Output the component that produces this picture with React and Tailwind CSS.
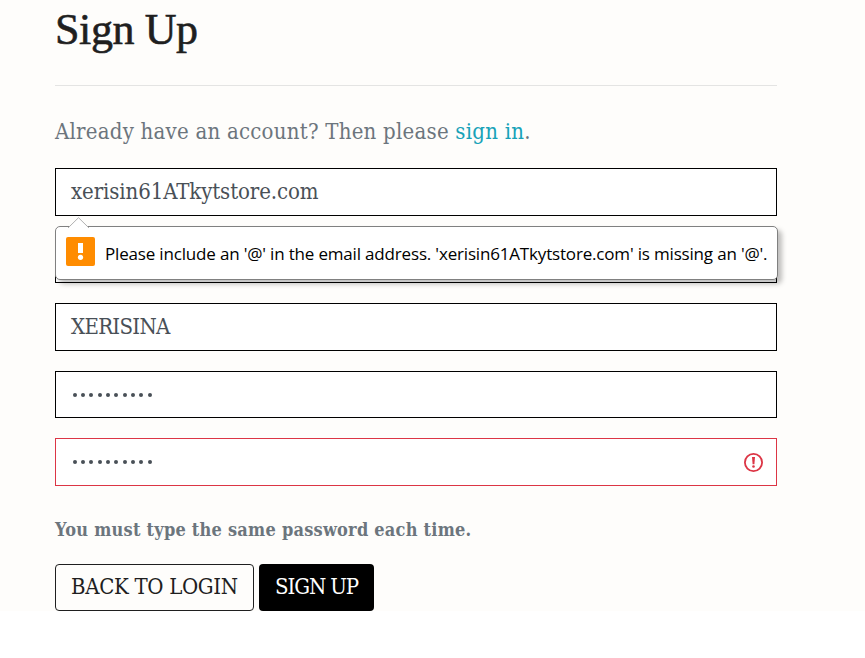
const serif = "font-['DejaVu_Serif_Condensed','DejaVu_Serif',serif] [font-stretch:condensed]";

function Dots() {
  return (
    <div className="flex gap-[4.35px] pl-[1.5px]">
      {Array.from({ length: 10 }, (_, i) => (
        <span key={i} className="size-[4px] rounded-full bg-[#495057]" />
      ))}
    </div>
  );
}

function Field({ children, height = 'h-12', border = 'border-black' }) {
  return (
    <div className={`relative flex w-full items-center border bg-white px-[15px] text-[#495057] ${height} ${border}`}>
      {children}
    </div>
  );
}

function ValidationBubble() {
  return (
    <div className="absolute top-[57px] -left-px z-10 flex h-[54px] w-[723px] items-center rounded-[5px] border border-[#808080] bg-white pl-[10px] shadow-[4px_4px_5px_rgba(0,0,0,0.25)]">
      <svg className="absolute -top-[10px] left-[11px]" width="23" height="11" viewBox="0 0 23 11">
        <path d="M1 11L11.5 .7L22 11" fill="#fff" stroke="#b0b0b0" />
      </svg>
      <svg className="-mt-[3px] shrink-0" width="29" height="29" viewBox="0 0 29 29">
        <rect width="29" height="29" rx="2" fill="#ff8c00" />
        <path d="M12 6h5v10h-5z" fill="#fff" />
        <circle cx="14.5" cy="20.3" r="2.6" fill="#fff" />
      </svg>
      <span className="mt-[2px] ml-[10px] whitespace-nowrap font-['Open_Sans','Noto_Sans',sans-serif] text-[17px] tracking-[-0.175px] text-black [font-stretch:normal]">
        Please include an '@' in the email address. 'xerisin61ATkytstore.com' is missing an '@'.
      </span>
    </div>
  );
}

export default function App() {
  return (
    <main className="h-[658px] w-full overflow-hidden bg-white">
      <div className={`h-[611px] bg-[#fefdfb] pl-[55px] ${serif}`}>
        <form className="w-[722px]">
          <header className="h-[86px] border-b border-[#e4e4e3] pt-[4px]">
            <h1 className="whitespace-nowrap font-['Liberation_Serif',serif] text-[44px] leading-[52px] tracking-[-0.4px] text-[#1f1f1f] [-webkit-text-stroke:0.6px_#1f1f1f]">Sign Up</h1>
          </header>
          <p className="h-[82px] whitespace-nowrap pt-[30px] text-[22px] leading-8 tracking-[0.23px] text-[#6c757d]">
            Already have an account? Then please <a className="text-[#17a2b8]">sign in</a>.
          </p>
          <div className="flex flex-col">
            <Field>
              <span className="-mt-px whitespace-nowrap text-[22px] tracking-[-0.1px]">xerisin61ATkytstore.com</span>
              <ValidationBubble />
            </Field>
            <div className="h-5" />
            <Field height="h-[47px]" />
            <div className="h-5" />
            <Field><span className="-mt-px whitespace-nowrap text-[22px] tracking-[-0.7px]">XERISINA</span></Field>
            <div className="h-5" />
            <Field height="h-[47px]"><Dots /></Field>
            <div className="h-5" />
            <Field border="border-[#dc3545]">
              <Dots />
              <svg className="mr-[-2px] ml-auto" width="20" height="20" viewBox="0 0 20 20" fill="none">
                <circle cx="10.5" cy="10.5" r="8.6" stroke="#dc3545" strokeWidth="1.8" />
                <path d="M9 5h3l-.6 7.2H9.6z" fill="#dc3545" />
                <circle cx="10.5" cy="14.5" r="1.3" fill="#dc3545" />
              </svg>
            </Field>
          </div>
          <p className="h-[78px] whitespace-nowrap pt-[32px] text-[18px] leading-6 font-bold tracking-[0.24px] text-[#6c757d]">You must type the same password each time.</p>
          <div className="flex gap-[5px]">
            <button type="button" className="h-[47px] w-[199px] whitespace-nowrap rounded-[4px] border border-[#1f1f1f] pb-[3px] pl-[15px] text-left text-[22px] tracking-[-0.33px] text-[#1f1f1f]">BACK TO LOGIN</button>
            <button type="button" className="h-[47px] w-[115px] whitespace-nowrap rounded-[4px] bg-black pb-[3px] pl-4 text-left text-[22px] tracking-[-1.1px] text-white">SIGN UP</button>
          </div>
        </form>
      </div>
    </main>
  );
}
